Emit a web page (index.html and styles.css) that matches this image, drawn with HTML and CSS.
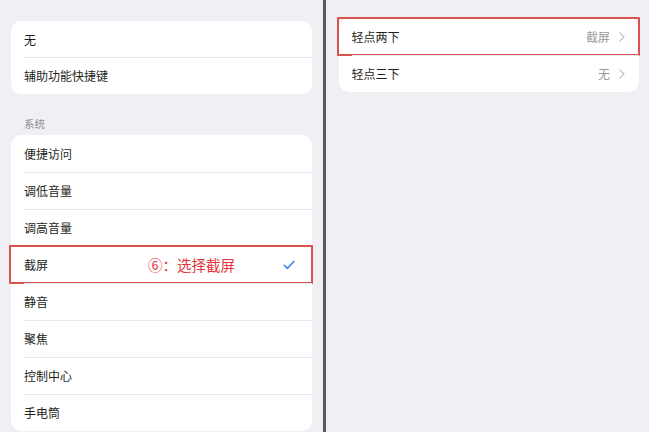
FILE: index.html
```html
<!DOCTYPE html>
<html lang="zh-CN">
<head>
<meta charset="utf-8">
<link rel="stylesheet" href="styles.css">
</head>
<body>
<div class="screen">
  <div class="pane left">
    <div class="card first">
      <div class="row"><span class="label">无</span></div>
      <div class="row"><span class="label">辅助功能快捷键</span></div>
    </div>
    <div class="section">系统</div>
    <div class="card">
      <div class="row"><span class="label">便捷访问</span></div>
      <div class="row"><span class="label">调低音量</span></div>
      <div class="row"><span class="label">调高音量</span></div>
      <div class="row marked">
        <span class="label">截屏</span>
        <span class="note">⑥：选择截屏</span>
        <svg class="check" width="12" height="10" viewBox="0 0 12 10"><path d="M1.2 5.2 L4.4 8.4 L10.8 1.4" fill="none" stroke="#3a7ff0" stroke-width="1.5" stroke-linecap="round" stroke-linejoin="round"/></svg>
      </div>
      <div class="row"><span class="label">静音</span></div>
      <div class="row"><span class="label">聚焦</span></div>
      <div class="row"><span class="label">控制中心</span></div>
      <div class="row"><span class="label">手电筒</span></div>
    </div>
  </div>
  <div class="divider"></div>
  <div class="pane right">
    <div class="card">
      <div class="row marked">
        <span class="label">轻点两下</span>
        <span class="value">截屏</span>
        <svg class="chev" width="6" height="10" viewBox="0 0 6 10"><path d="M1 1 L5 5 L1 9" fill="none" stroke="#c4c4c8" stroke-width="1.3" stroke-linecap="round" stroke-linejoin="round"/></svg>
      </div>
      <div class="row">
        <span class="label">轻点三下</span>
        <span class="value">无</span>
        <svg class="chev" width="6" height="10" viewBox="0 0 6 10"><path d="M1 1 L5 5 L1 9" fill="none" stroke="#c4c4c8" stroke-width="1.3" stroke-linecap="round" stroke-linejoin="round"/></svg>
      </div>
    </div>
  </div>
</div>
</body>
</html>
```

FILE: styles.css
```css
* { box-sizing: border-box; }
html, body {
  margin: 0;
  padding: 0;
  width: 649px;
  height: 432px;
  overflow: hidden;
  background: #efeff4;
  font-family: "Noto Sans CJK SC", "Noto Sans", sans-serif;
  color: #1f1f22;
}
.screen {
  display: flex;
  height: 432px;
}
.pane {
  flex: 1;
  min-width: 0;
}
.left {
  padding: 21px 11px 0 11px;
}
.right {
  padding: 18px 10px 0 13px;
}
.divider {
  width: 3px;
  background: #5a5a5e;
}
.card {
  background: #ffffff;
  border-radius: 10px;
}
.row {
  position: relative;
  display: flex;
  align-items: center;
  height: 37px;
  padding: 0 17px 0 13px;
  font-size: 12px;
}
.row + .row::before {
  content: "";
  position: absolute;
  top: 0;
  left: 13px;
  right: 0;
  height: 1px;
  background: #e8e8ec;
}
.card.first .row:first-child { height: 36px; }
.label { flex: 1; }
.section {
  font-size: 10.5px;
  color: #8e8e93;
  padding: 22px 0 0 13px;
  height: 41px;
}
.marked::after {
  content: "";
  position: absolute;
  top: -1px;
  bottom: -1px;
  left: -2px;
  right: -1px;
  border: 2px solid #d9534f;
  border-radius: 1px;
}
.note {
  position: absolute;
  left: 137px;
  top: 8px;
  font-size: 14.5px;
  color: #e0383e;
}
.check { margin-right: 0; }
.value {
  color: #9a9a9e;
  margin-right: 9px;
}
.chev { margin-right: -3px; }
```
